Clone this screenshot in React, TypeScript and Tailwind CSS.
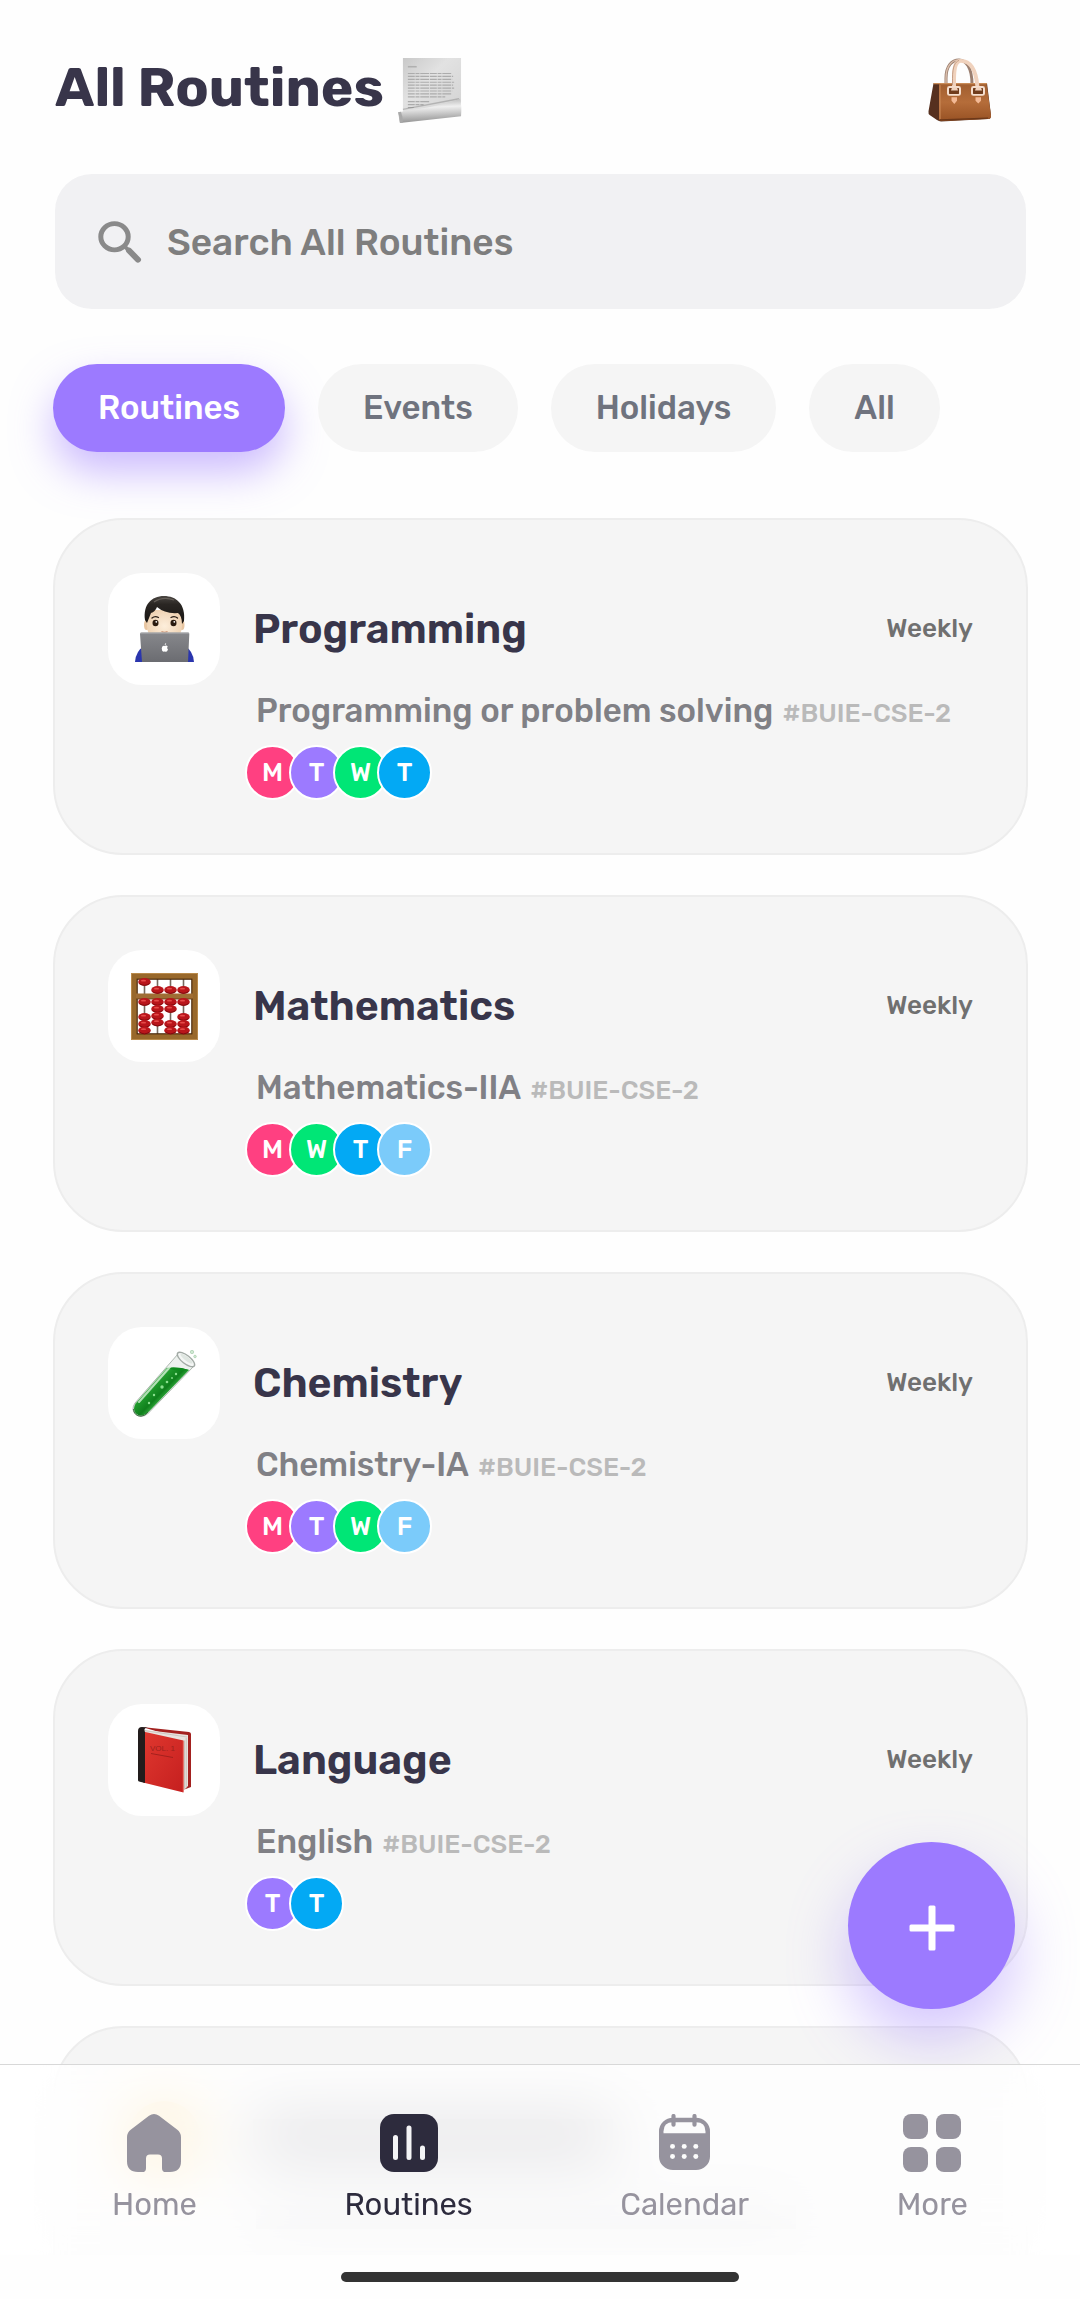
import type { ReactNode } from "react";

function ScrollIcon() {
  return (
    <svg viewBox="0 0 66 68" preserveAspectRatio="none" className="mt-1.5 h-[66px] w-[65px]" aria-hidden="true">
      <defs>
        <linearGradient id="sheet" x1="0" y1="0" x2="1" y2="1">
          <stop offset="0" stopColor="#c9c9c9" />
          <stop offset="0.4" stopColor="#e2e2e2" />
          <stop offset="1" stopColor="#d2d2d2" />
        </linearGradient>
        <linearGradient id="roll" x1="0.45" y1="0" x2="0.55" y2="1">
          <stop offset="0" stopColor="#b5b5b5" />
          <stop offset="0.35" stopColor="#efefef" />
          <stop offset="1" stopColor="#8e8e8e" />
        </linearGradient>
      </defs>
      <path d="M5 0H64V46L5 58Z" fill="url(#sheet)" />
      <path d="M10 9h9" stroke="#b0b0b0" strokeWidth="1.6" />
      <path
        d="M10 16h44M10 19h46M10 22h45M10 25h47M10 28h46M10 31h47M10 34h45M10 37h44M10 40h38M10 45h22M10 48h16M10 51h6"
        stroke="#acacac"
        strokeWidth="1.2"
        strokeDasharray="7 0.8 4 0.8 9 0.8"
      />
      <path d="M5 53L62 42" stroke="#777" strokeOpacity="0.4" strokeWidth="1.4" />
      <path d="M0 56L30 51Q50 47 63 42Q65 50 64 60L2 67Z" fill="url(#roll)" />
      <path d="M0 56q2 5 2 11l3-.5q0-6-2-11Z" fill="#a9a9a9" />
    </svg>
  );
}

function BagIcon() {
  return (
    <svg viewBox="0 0 64 66" preserveAspectRatio="none" className="mt-1 size-16" aria-hidden="true">
      <defs>
        <linearGradient id="leather" x1="0" y1="0" x2="0" y2="1">
          <stop offset="0" stopColor="#a05e30" />
          <stop offset="0.5" stopColor="#b56d3a" />
          <stop offset="1" stopColor="#985224" />
        </linearGradient>
      </defs>
      <path d="M18 27V21C18 8 24 2 31 2S44 10 44 27" fill="none" stroke="#9b7f70" strokeWidth="3" />
      <path d="M18 27V21C18 8 24 2 31 2" fill="none" stroke="#dcc0ad" strokeWidth="1.4" />
      <path d="M5.5 26H59L63 59Q63 63 60 63L13 65.500Q11 65.500 9 64L2 59Q0 58 .5 55Z" fill="#56301f" />
      <path d="M11 26H58.500L63 59Q63.500 62.500 60 63L13 65Q11 65 11 63Z" fill="url(#leather)" />
      <path d="M5.500 26.500H59" stroke="#c98b58" strokeWidth="1.2" />
      <path d="M12 28V63" stroke="#cf8d5c" strokeWidth="1" />
      <path d="M12 64L60 62" stroke="#6c3819" strokeWidth="1.500" />
      <path d="M26 30V22C26 8 28 3 33 3C42 3 48 12 49.500 30" fill="none" stroke="#f0d2bd" strokeWidth="4" />
      <path d="M24.500 28V21C24.500 9 27 4 31 2.500" fill="none" stroke="#b78d74" strokeWidth="0.8" />
      <g fill="#6f3c1c" stroke="#f5dfcf" strokeWidth="2">
        <rect x="20" y="30" width="12" height="8" rx="1.500" />
        <rect x="44" y="30" width="12" height="8" rx="1.500" />
      </g>
      <path d="M24 30.500h5l1 3h-7ZM48 30.500h5l1 3h-7Z" fill="#f0d2bd" />
      <path d="M23.500 40.500h5.500v3.500l-2.700 3.500l-2.800-3.500ZM47.500 40.500H53V44l-2.700 3L47.500 44Z" fill="#f3b995" />
    </svg>
  );
}

function TechnologistIcon() {
  return (
    <svg viewBox="0 0 59 66" className="h-[66px] w-[59px]" aria-hidden="true">
      <defs>
        <radialGradient id="skin" cx="0.5" cy="0.5" r="0.6">
          <stop offset="0" stopColor="#fdeedb" />
          <stop offset="1" stopColor="#edcfae" />
        </radialGradient>
        <linearGradient id="hair" x1="0" y1="0" x2="0" y2="1">
          <stop offset="0" stopColor="#4a4642" />
          <stop offset="0.3" stopColor="#2a2623" />
          <stop offset="1" stopColor="#171412" />
        </linearGradient>
        <linearGradient id="lid" x1="0" y1="0" x2="0" y2="1">
          <stop offset="0" stopColor="#87888c" />
          <stop offset="1" stopColor="#6b6c71" />
        </linearGradient>
      </defs>
      <path d="M0 66Q1 54 10 50H49Q58 54 59 66Z" fill="#2a35ad" />
      <ellipse cx="11.500" cy="29" rx="2.500" ry="5" fill="#e8c6a2" />
      <ellipse cx="47" cy="29" rx="2.500" ry="5" fill="#e8c6a2" />
      <path d="M12 14H47V30Q46 46 29.500 46T12 30Z" fill="url(#skin)" />
      <path d="M10 24C8 9 16 0 29 0C41 0 51 8 49 25L47 28Q47 20 43 17Q30 18 22 11Q20 16 16 17L12 27Z" fill="url(#hair)" />
      <path d="M19 6Q28 0 39 4" stroke="#77716a" strokeWidth="1.200" fill="none" opacity="0.7" />
      <path d="M17 22q3-2.500 6.500-.5M36 21.500q3.500-2 6.500.500" stroke="#2c2018" strokeWidth="1.300" fill="none" strokeLinecap="round" />
      <ellipse cx="20.500" cy="27" rx="3" ry="3.300" fill="#2a1b10" />
      <ellipse cx="38.500" cy="27" rx="3" ry="3.300" fill="#2a1b10" />
      <circle cx="21.300" cy="25.800" r="0.900" fill="#fff" />
      <circle cx="39.300" cy="25.800" r="0.900" fill="#fff" />
      <path d="M26.500 35.500q3 1.500 6 0" stroke="#c99072" strokeWidth="1.200" fill="none" />
      <path d="M6.500 36.500H53Q54.500 36.500 54.300 38L53 66H7L5 38Q5 36.500 6.500 36.500Z" fill="url(#lid)" />
      <path d="M5.500 37H54" stroke="#b6b7ba" strokeWidth="0.900" />
      <path d="M29.600 50Q31.500 49 32.700 50.500Q31.200 52 33 53.500Q32 56 30.800 55.700Q29.600 55.200 28.600 55.700Q26.800 55.500 26.700 52.500Q27 49 29.600 50ZM29.600 49.200Q29.700 47.400 31.200 47Q31.300 48.800 29.600 49.200Z" fill="#fff" />
    </svg>
  );
}

const abacusBeads: [number, number][] = [
  [13.5, 9], [26.5, 17], [39.5, 17], [52.5, 17],
  [13.5, 29], [13.5, 44], [13.5, 51], [13.5, 57.5],
  [26.5, 29], [26.5, 36], [26.5, 43], [26.5, 49.5],
  [39.5, 29], [39.5, 36], [39.5, 51], [39.5, 57.5],
  [52.5, 29], [52.5, 44], [52.5, 51], [52.5, 57.5],
];

function AbacusIcon() {
  return (
    <svg viewBox="0 0 67 67" className="size-[67px]" aria-hidden="true">
      <path d="M13.500 5V62M26.500 5V62M39.500 5V62M52.500 5V62" stroke="#776a60" strokeWidth="1.600" />
      <rect x="3" y="3" width="61" height="61" fill="none" stroke="#98682b" strokeWidth="6" />
      <rect x="6.200" y="6.200" width="54.600" height="54.600" fill="none" stroke="#4b2a0a" strokeWidth="1.200" />
      <rect x="0.500" y="0.500" width="66" height="66" fill="none" stroke="#b98a4b" />
      <rect x="5" y="20.500" width="57" height="5.500" fill="#9f6d34" />
      <path d="M5 26H62" stroke="#5e3812" strokeWidth="0.800" />
      {abacusBeads.map(([x, y]) => (
        <g key={`${x}-${y}`}>
          <ellipse cx={x} cy={y} rx="6.300" ry="3.900" fill="#b9151b" />
          <ellipse cx={x - 1} cy={y - 1.3} rx="2.600" ry="0.900" fill="#e64b49" />
          <path d={`M${x - 5} ${y + 1.6}Q${x} ${y + 5} ${x + 5} ${y + 1.6}`} stroke="#6d0a0d" strokeWidth="0.800" fill="none" />
        </g>
      ))}
    </svg>
  );
}

function TestTubeIcon() {
  return (
    <svg viewBox="0 0 65 67" className="h-[67px] w-[65px]" aria-hidden="true">
      <defs>
        <linearGradient id="tube" x1="0.250" y1="0.350" x2="0.600" y2="0.650">
          <stop offset="0" stopColor="#8ecf93" />
          <stop offset="0.250" stopColor="#1f9a2c" />
          <stop offset="0.650" stopColor="#0f7f1c" />
          <stop offset="1" stopColor="#43c14d" />
        </linearGradient>
      </defs>
      <path d="M46 4L3 53Q-1.500 60 4 64.500Q9 68.500 15.500 64L61 17Z" fill="#edf1ee" stroke="#aeb8b0" strokeWidth="1" />
      <path d="M34.500 18L3.500 53.500Q0 60 4.500 64Q9 67.500 15 63.500L57 20Q46 16.500 34.500 18Z" fill="url(#tube)" />
      <path d="M34.500 18Q46 16.500 57 20Q46 22 34.500 18Z" fill="#0d8a1c" />
      <path d="M38 17L7 52" stroke="#dff5df" strokeWidth="2" opacity="0.750" strokeLinecap="round" />
      <path d="M1.500 59Q2 66 9 66.200Q13 66 16 62" fill="none" stroke="#3b6e40" strokeWidth="1" />
      <ellipse cx="54" cy="9.500" rx="10.500" ry="4.200" transform="rotate(38 54 9.500)" fill="#f4f6f5" stroke="#a2aaa5" strokeWidth="1.400" />
      <ellipse cx="54.500" cy="8.700" rx="7.500" ry="2" transform="rotate(38 54.500 8.700)" fill="#dfe6e1" />
      <g fill="#8be08f">
        <circle cx="44" cy="24" r="1.200" />
        <circle cx="35" cy="32" r="1.300" />
        <circle cx="30" cy="37" r="1.700" />
        <circle cx="22" cy="45" r="1.200" />
        <circle cx="17" cy="53" r="1.200" />
        <circle cx="40" cy="28" r="0.900" />
      </g>
      <circle cx="60" cy="2" r="1.700" fill="#cfe9d2" stroke="#9fc7a4" strokeWidth="0.600" />
      <circle cx="63" cy="6.500" r="1.300" fill="#cfe9d2" stroke="#9fc7a4" strokeWidth="0.600" />
    </svg>
  );
}

function BookIcon() {
  return (
    <svg viewBox="0 0 53 66" className="h-[66px] w-[53px]" aria-hidden="true">
      <defs>
        <linearGradient id="cover" x1="0" y1="0" x2="1" y2="1">
          <stop offset="0" stopColor="#e0382f" />
          <stop offset="1" stopColor="#c51f1f" />
        </linearGradient>
      </defs>
      <path d="M4 0L51 5Q53 5.300 53 7V60L45 63V12Z" fill="#a3211f" />
      <path d="M4 2.500L50 8V59L45 64V14L5 5Z" fill="#e9e3de" />
      <path d="M46.500 13.500V62M48.200 11V60.500" stroke="#bdb3ac" strokeWidth="0.700" />
      <path d="M6 3.500L49 10" stroke="#c3bbb6" strokeWidth="0.700" />
      <path d="M5 4.500L45.500 13.500V65.500L5 55.500Z" fill="url(#cover)" />
      <path d="M0 4Q0 0 4 0L10 .6Q5 1 7 5V56L1 54.500Q0 54 0 53Z" fill="#221c1c" />
      <path d="M45.200 14V65" stroke="#ed6a5f" strokeWidth="0.700" />
      <text x="12" y="24" fontSize="8" fill="#9c211d" className="font-['Liberation_Sans']">VOL. 1</text>
      <path d="M13 26.500L35 30.500" stroke="#9e1f1c" strokeWidth="0.900" />
    </svg>
  );
}

function SearchIcon() {
  return (
    <svg viewBox="0 0 44 44" preserveAspectRatio="none" className="h-[42px] w-11" fill="none" stroke="#8a8a8a" aria-hidden="true">
      <circle cx="16.500" cy="16.500" r="13.700" strokeWidth="5" />
      <path d="M27 27L31 31" strokeWidth="4" />
      <path d="M31 31L40 40.500" strokeWidth="6" strokeLinecap="round" />
    </svg>
  );
}

function HomeIcon() {
  return (
    <svg viewBox="0 0 54 60" preserveAspectRatio="none" className="h-[58px] w-[54px]" fill="currentColor" aria-hidden="true">
      <path d="M22 1.800Q27 -1.600 32 1.800L50 16Q54 19 54 24V49Q54 60 43 60H39Q35 60 35 56V46Q35 42 31 42H23Q19 42 19 46V56Q19 60 15 60H11Q0 60 0 49V24Q0 19 4 16Z" />
    </svg>
  );
}

function RoutinesIcon() {
  return (
    <svg viewBox="0 0 58 58" className="size-[58px]" aria-hidden="true">
      <rect width="58" height="58" rx="14" fill="currentColor" />
      <path d="M15.500 23.500V43.500M29 14V43.500M42.500 34V43.500" stroke="#f4f4f6" strokeWidth="5" strokeLinecap="round" />
    </svg>
  );
}

function CalendarIcon() {
  return (
    <svg viewBox="0 0 51 60" preserveAspectRatio="none" className="h-[58px] w-[51px]" aria-hidden="true">
      <rect y="4" width="51" height="54" rx="14" fill="currentColor" />
      <path d="M4.500 20V18Q4.500 8.500 14 8.500H37Q46.500 8.500 46.500 18V20Z" fill="#fcfcfc" />
      <path d="M14.500 2V11M35.500 2V11" stroke="currentColor" strokeWidth="4.200" strokeLinecap="round" />
      <g fill="#fcfcfc">
        {[13.5, 25.2, 36.8].map((x) => (
          <g key={x}>
            <circle cx={x} cy="33.500" r="2.500" />
            <circle cx={x} cy="44" r="2.500" />
          </g>
        ))}
      </g>
    </svg>
  );
}

function MoreIcon() {
  return (
    <svg viewBox="0 0 58 58" className="size-[58px]" fill="currentColor" aria-hidden="true">
      <rect width="25" height="25" rx="8" />
      <rect x="33" width="25" height="25" rx="8" />
      <rect y="33" width="25" height="25" rx="8" />
      <rect x="33" y="33" width="25" height="25" rx="8" />
    </svg>
  );
}

type Day = { letter: string; color: string };
const MON: Day = { letter: "M", color: "bg-[#ff4081]" };
const TUE: Day = { letter: "T", color: "bg-[#9c7aff]" };
const WED: Day = { letter: "W", color: "bg-[#00e676]" };
const THU: Day = { letter: "T", color: "bg-[#03a9f4]" };
const FRI: Day = { letter: "F", color: "bg-[#7bcbfa]" };

type Routine = { name: string; detail: string; icon: ReactNode; days: Day[] };

const routines: Routine[] = [
  { name: "Programming", detail: "Programming or problem solving", icon: <TechnologistIcon />, days: [MON, TUE, WED, THU] },
  { name: "Mathematics", detail: "Mathematics-IIA", icon: <AbacusIcon />, days: [MON, WED, THU, FRI] },
  { name: "Chemistry", detail: "Chemistry-IA", icon: <TestTubeIcon />, days: [MON, TUE, WED, FRI] },
  { name: "Language", detail: "English", icon: <BookIcon />, days: [TUE, THU] },
];

const cardClass = "rounded-[70px] border-2 border-[#ededed] bg-[#f5f5f5] p-[53px]";

function RoutineCard({ name, detail, icon, days }: Routine) {
  return (
    <li className={cardClass}>
      <div className="flex items-center">
        <div className="flex size-28 shrink-0 items-center justify-center rounded-[34px] bg-white">{icon}</div>
        <h2 className="ml-[33px] flex-1 text-[41px] leading-[48px] font-semibold text-[#38354a]">{name}</h2>
        <span className="text-[26px] leading-8 font-medium text-[#707070]">Weekly</span>
      </div>
      <p className="mt-1.5 ml-[148px] flex items-baseline gap-[9px] text-[33px] leading-10 font-medium whitespace-nowrap text-[#808085]">
        {detail}
        <span className="text-[26px] leading-none text-[#bababa]">#BUIE-CSE-2</span>
      </p>
      <ul className="mt-3.5 ml-[137px] flex">
        {days.map(({ letter, color }, i) => (
          <li
            key={i}
            className={`-mr-[11px] flex size-[55px] items-center justify-center rounded-full border-2 border-white text-[26px] leading-8 font-medium text-white ${color}`}
          >
            {letter}
          </li>
        ))}
      </ul>
    </li>
  );
}

function PendingCard() {
  return (
    <li className={cardClass} aria-hidden="true">
      <div className="flex items-center">
        <div className="flex size-28 items-center justify-center rounded-[34px] bg-white">
          <div className="size-[72px] rounded-full bg-[#f2b430]" />
        </div>
        <div className="ml-[33px] h-9 w-[360px] bg-[#5d5a68]" />
      </div>
      <div className="mt-3 ml-[148px] h-6 w-[540px] bg-[#c8c8cc]" />
      <div className="mt-6 h-[55px]" />
    </li>
  );
}

const filters = ["Routines", "Events", "Holidays", "All"];

const tabs = [
  { label: "Home", icon: <HomeIcon /> },
  { label: "Routines", icon: <RoutinesIcon /> },
  { label: "Calendar", icon: <CalendarIcon /> },
  { label: "More", icon: <MoreIcon /> },
];

export default function App() {
  return (
    <div className="relative h-screen overflow-hidden bg-[#fefefe] font-['Rubik','Roboto',sans-serif]">
      <main className="h-full overflow-y-auto pt-[52px] pr-[52px] pl-[53px] [scrollbar-width:none]">
        <header className="flex h-[72px] items-center justify-between pr-[36px] pl-0.5">
          <h1 className="flex items-center gap-3.5 text-[55px] leading-[72px] font-bold text-[#38354a]">
            All Routines <ScrollIcon />
          </h1>
          <button type="button" aria-label="Bag">
            <BagIcon />
          </button>
        </header>

        <label className="mx-0.5 mt-[50px] flex h-[135px] items-center gap-[25px] rounded-[37px] bg-[#f1f1f3] px-[43px]">
          <SearchIcon />
          <input
            type="search"
            aria-label="Search All Routines"
            placeholder="Search All Routines"
            className="min-w-0 flex-1 bg-transparent text-[37px] leading-[48px] font-medium outline-none placeholder:text-[#7e7e7e]"
          />
        </label>

        <div className="mt-[55px] flex gap-[33px]">
          {filters.map((name, i) => (
            <button
              key={name}
              type="button"
              aria-pressed={i === 0}
              className={
                i === 0
                  ? "h-[88px] rounded-full bg-[#9c7aff] px-[45px] text-[33px] leading-10 font-medium text-white shadow-[0_20px_40px_rgba(156,122,255,0.5)]"
                  : "h-[88px] rounded-full bg-[#f5f5f5] px-[45px] text-[33px] leading-10 font-medium text-[#6f737e]"
              }
            >
              {name}
            </button>
          ))}
        </div>

        <ul className="mt-[66px] flex flex-col gap-10 pb-60">
          {routines.map((routine) => (
            <RoutineCard key={routine.name} {...routine} />
          ))}
          <PendingCard />
        </ul>
      </main>

      <button
        type="button"
        aria-label="Add routine"
        className="absolute right-[65px] bottom-[290px] flex size-[167px] items-center justify-center rounded-full bg-[#9c7aff] shadow-[0_30px_60px_rgba(156,122,255,0.42)]"
      >
        <svg viewBox="0 0 46 46" className="mt-1 size-[46px]" fill="#fff" aria-hidden="true">
          <rect x="19.500" y="0.500" width="7" height="45" rx="1.500" />
          <rect x="0.500" y="19.500" width="45" height="7" rx="1.500" />
        </svg>
      </button>

      <footer className="absolute inset-x-0 bottom-0">
        <nav className="flex justify-between border-t border-[#d8d8d8] bg-white/80 px-28 pt-[49px] pb-[30px] backdrop-blur-[32px]">
          {tabs.map(({ label, icon }) => (
            <a
              key={label}
              href={`#${label.toLowerCase()}`}
              aria-current={label === "Routines" ? "page" : undefined}
              className={
                label === "Routines"
                  ? "flex flex-col items-center gap-[13px] text-[31px] leading-10 text-[#2d2b3d]"
                  : "flex flex-col items-center gap-[13px] text-[31px] leading-10 text-[#96939e]"
              }
            >
              {icon}
              {label}
            </a>
          ))}
        </nav>
        <div className="flex justify-center bg-[#fefefe] py-[17px]">
          <div className="h-2.5 w-[398px] rounded-full bg-[#333]" />
        </div>
      </footer>
    </div>
  );
}
